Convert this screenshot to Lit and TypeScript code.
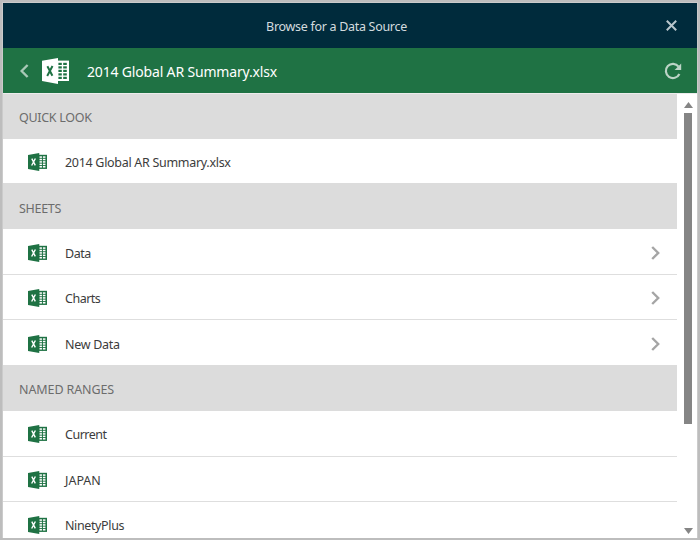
import { LitElement, html, css, svg, nothing } from "lit";
import { customElement, property } from "lit/decorators.js";

interface Entry { label: string; drill?: boolean; tone?: string }
interface Section { title: string; tone?: string; entries: Entry[] }

const sections: Section[] = [
  { title: "QUICK LOOK", tone: "first", entries: [{ label: "2014 Global AR Summary.xlsx", tone: "last" }] },
  {
    title: "SHEETS",
    entries: [
      { label: "Data", drill: true, tone: "tall lower tight" },
      { label: "Charts", drill: true, tone: "tight" },
      { label: "New Data", drill: true, tone: "end lower" },
    ],
  },
  {
    title: "NAMED RANGES",
    tone: "wide",
    entries: [{ label: "Current", tone: "tall tight" }, { label: "JAPAN", tone: "caps" }, { label: "NinetyPlus", tone: "semi" }],
  },
];

@customElement("excel-icon")
export class ExcelIcon extends LitElement {
  @property({ type: Boolean, reflect: true }) inverted = false;

  static styles = css`
    :host { display: block; width: 19px; height: 18px; --ink: #1f7244; --paper: #fff; }
    :host([inverted]) { width: 27px; height: 26px; --ink: #fff; --paper: #1f7244; }
    svg { display: block; width: 100%; height: 100%; }
    .ink { fill: var(--ink); }
    .paper { fill: var(--paper); }
    .x { fill: none; stroke: var(--paper); stroke-width: 2; }
  `;

  render() {
    return html`<svg viewBox="0 0 27 26" preserveAspectRatio="none">
      <path class="ink" d="M0 2.8 L16 0 V26 L0 23 Z" />
      <path class="ink" d="M15 2.6 H27 V23 H15 Z" />
      ${[0, 1, 2, 3, 4].map(
        (r) => svg`<rect class="paper" x="16.4" y=${4.8 + r * 3.5} width="3.4" height="2.2" />
          <rect class="paper" x="21.2" y=${4.8 + r * 3.5} width="3.6" height="2.2" />`
      )}
      <path class="x" d="M5.4 8.2 L10.4 17.8 M10.5 8 L5.2 18" />
    </svg>`;
  }
}

@customElement("app-root")
export class AppRoot extends LitElement {
  static styles = css`
    :host {
      display: flex; flex-direction: column; box-sizing: border-box;
      width: 700px; height: 540px; overflow: hidden;
      border: 2px solid #bdbdbd; padding: 1px 1px 0;
      background: #cbcbcb; color: #3c3c3c;
      font: 12.5px/18px "Noto Sans", "Open Sans", sans-serif;
      letter-spacing: -0.3px;
    }
    .title {
      position: relative; flex: none; height: 45px; display: flex;
      align-items: center; justify-content: center; box-sizing: border-box;
      padding: 2px 27px 0 0; background: #002b3c; color: #d3dbdf;
    }
    .close { position: absolute; right: 20px; top: 17px; width: 11px; height: 11px; }
    .source {
      flex: none; height: 45px; display: flex; align-items: center;
      background: #1f7244; color: #fff; font-size: 14px; letter-spacing: -0.17px;
      box-sizing: border-box; padding: 0 15.5px 0 17px;
    }
    .back { width: 9px; height: 14px; margin-right: 13px; }
    .name { margin: 3px auto 0 18px; }
    .refresh { width: 18px; height: 18px; }
    .body {
      flex: 1; min-height: 0; display: flex; box-sizing: border-box;
      background: #fff; border-top: 1px solid #ececec;
    }
    .list { flex: none; width: 674px; overflow: hidden; }
    .head {
      height: 46px; box-sizing: border-box; padding: 17px 0 0 16px;
      background: #dcdcdc; color: #6c6c6c;
    }
    .first { height: 45px; padding-top: 15px; }
    .wide { letter-spacing: -0.1px; padding-top: 16px; }
    .row {
      height: 45px; box-sizing: border-box; border-bottom: 1px solid #dedede;
      display: flex; align-items: center; padding: 1px 17px 0 25px;
    }
    .tall { height: 46px; }
    .last { height: 44px; border: 0; }
    .end { border: 0; }
    .lower { padding-top: 2px; }
    .caps { letter-spacing: 0; }
    .semi { letter-spacing: -0.38px; }
    .tight { letter-spacing: -0.5px; }
    .label { margin: 2px auto 0 18px; }
    .go { width: 9px; height: 14px; }
    .bar { flex: 1; display: flex; flex-direction: column; align-items: center; padding: 8px 0 4px 2px; }
    .arrow { width: 9px; height: 6px; fill: #858585; }
    .thumb { width: 8px; height: 311px; margin: 5px 0 auto; background: #858585; }
    svg { display: block; flex: none; }
    .line { fill: none; stroke: #a5a5a5; stroke-width: 2.4; }
    .light { stroke: #a9c9b7; }
    .ring { stroke: #bbd4c6; stroke-width: 2.2; }
    .head-fill { fill: #bbd4c6; }
    .pale { stroke: #b9c6cc; stroke-width: 2; }
  `;

  private row(e: Entry) {
    return html`<div class="row ${e.tone ?? ""}">
      <excel-icon></excel-icon>
      <span class="label">${e.label}</span>
      ${e.drill
        ? html`<svg class="go" viewBox="0 0 9 14"><path class="line" d="M1.2 1 L7.2 7 L1.2 13" /></svg>`
        : nothing}
    </div>`;
  }

  render() {
    return html`
      <div class="title">
        <span>Browse for a Data Source</span>
        <svg class="close" viewBox="0 0 11 11"><path class="line pale" d="M0.8 0.8 L10.2 10.2 M10.2 0.8 L0.8 10.2" /></svg>
      </div>
      <div class="source">
        <svg class="back" viewBox="0 0 9 14"><path class="line light" d="M7.6 1 L1.6 7 L7.6 13" /></svg>
        <excel-icon inverted></excel-icon>
        <span class="name">2014 Global AR Summary.xlsx</span>
        <svg class="refresh" viewBox="0 0 18 18">
          <path class="line ring" d="M14.6 4.6 A7.1 7.1 0 1 0 15.4 12" />
          <path class="head-fill" d="M17.2 1.6 V8 H10.6 Z" />
        </svg>
      </div>
      <div class="body">
        <div class="list">
          ${sections.map(
            (s) => html`<div class="head ${s.tone ?? ""}">${s.title}</div>${s.entries.map((e) => this.row(e))}`
          )}
        </div>
        <div class="bar">
          <svg class="arrow" viewBox="0 0 9 6"><path d="M0 6 L4.5 0 L9 6 Z" /></svg>
          <div class="thumb"></div>
          <svg class="arrow" viewBox="0 0 9 6"><path d="M0 0 H9 L4.5 6 Z" /></svg>
        </div>
      </div>
    `;
  }
}
